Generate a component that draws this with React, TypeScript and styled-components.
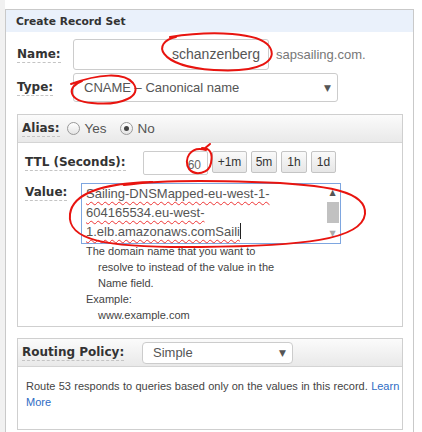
import styled, { createGlobalStyle } from 'styled-components';

const GlobalStyle = createGlobalStyle`
  html, body {
    margin: 0;
    padding: 0;
    background: #fff;
  }
  body {
    font-family: 'Liberation Sans', Arial, sans-serif;
    color: #333;
  }
`;

export default function App() {
  return (
    <>
      <GlobalStyle />
      <Page>
        <Panel>
          <PanelTitle>Create Record Set</PanelTitle>
          <PanelBody>
            <Row>
              <Label $width={56}>
                <Dashed>Name:</Dashed>
              </Label>
              <NameInput>schanzenberg</NameInput>
              <Suffix>sapsailing.com.</Suffix>
            </Row>
            <Row $top={3}>
              <Label $width={56}>
                <Dashed>Type:</Dashed>
              </Label>
              <Select $width={265} $height={29}>
                <span>CNAME – Canonical name</span>
                <Arrow>▼</Arrow>
              </Select>
            </Row>

            <Box $top={12}>
              <BoxHeader>
                <Label>
                  <Dashed>Alias:</Dashed>
                </Label>
                <Radio>
                  <RadioDot />
                  Yes
                </Radio>
                <Radio>
                  <RadioDot $checked />
                  No
                </Radio>
              </BoxHeader>
              <AliasBody>
                <Row>
                  <Label $width={118}>
                    <Dashed>TTL (Seconds):</Dashed>
                  </Label>
                  <TtlInput>60</TtlInput>
                  <TtlButtons>
                    <TtlButton $width={35}>+1m</TtlButton>
                    <TtlButton $width={26}>5m</TtlButton>
                    <TtlButton $width={26}>1h</TtlButton>
                    <TtlButton $width={25}>1d</TtlButton>
                  </TtlButtons>
                </Row>
                <Row $top={8} $align='flex-start'>
                  <Label $width={56} $pad={2}>
                    <Dashed>Value:</Dashed>
                  </Label>
                  <ValueCol>
                    <TextArea>
                      <TextLines>
                        <Squiggle>Sailing-DNSMapped-eu-west-1-</Squiggle>
                        <Squiggle>604165534.eu-west-</Squiggle>
                        <Squiggle>
                          1.elb.amazonaws.comSaili<Caret />
                        </Squiggle>
                      </TextLines>
                      <ScrollBar>
                        <ScrollArrow>▲</ScrollArrow>
                        <ScrollThumb />
                        <ScrollArrow $muted>▼</ScrollArrow>
                      </ScrollBar>
                    </TextArea>
                    <Help>
                      <div>The domain name that you want to</div>
                      <HelpIndent>resolve to instead of the value in the</HelpIndent>
                      <HelpIndent>Name field.</HelpIndent>
                      <div>Example:</div>
                      <HelpIndent>www.example.com</HelpIndent>
                    </Help>
                  </ValueCol>
                </Row>
              </AliasBody>
            </Box>

            <Box $top={11}>
              <BoxHeader>
                <Label $width={120}>
                  <Dashed>Routing Policy:</Dashed>
                </Label>
                <Select $width={151} $height={22} $small>
                  <span>Simple</span>
                  <Arrow>▼</Arrow>
                </Select>
              </BoxHeader>
              <RoutingBody>
                Route 53 responds to queries based only on the values in this record.{' '}
                <Link>Learn</Link> <Link>More</Link>
              </RoutingBody>
            </Box>
          </PanelBody>
        </Panel>

        <Marks viewBox='0 0 422 432' width='422' height='432'>
          {/* name */}
          <path d='M176 37 C152 42 156 66 214 70 C262 73 279 60 269 46 C259 33 214 30 170 37' />
          {/* type */}
          <path d='M82 81 C66 87 68 101 92 103 C122 106 143 96 133 83 C124 72 98 74 71 84' />
          {/* ttl */}
          <path d='M206 150 C190 145 183 160 189 169 C195 176 209 174 211 163 C213 153 210 148 202 148 M204 149 L210 144' />
          {/* value */}
          <path d='M152 182 C110 183 73 191 70 214 C67 240 102 248 200 247 C302 246 362 240 365 214 C367 192 330 184 252 182 C200 180 160 180 124 185' />
        </Marks>
      </Page>
    </>
  );
}

const Page = styled.div`
  position: relative;
  width: 422px;
  height: 432px;
  overflow: hidden;
  box-sizing: border-box;
  padding: 9px 8px 0 0;
  border-left: 5px solid #f1f1f1;
`;

const Panel = styled.div`
  width: 409px;
  border: 1px solid #c9c9c9;
  border-bottom: none;
  box-sizing: border-box;
  min-height: 440px;
`;

const PanelTitle = styled.div`
  height: 22px;
  background: #eaf1fb;
  padding-left: 10px;
  font-family: 'DejaVu Sans', Verdana, sans-serif;
  font-weight: bold;
  font-size: 10.7px;
  line-height: 23px;
  color: #333;
`;

const PanelBody = styled.div`
  padding: 7px 10px 0 11px;
`;

const Row = styled.div<{ $top?: number; $align?: string }>`
  display: flex;
  align-items: ${(p) => p.$align || 'center'};
  margin-top: ${(p) => p.$top || 0}px;
`;

const Label = styled.span<{ $width?: number; $pad?: number }>`
  flex: none;
  width: ${(p) => (p.$width ? `${p.$width}px` : 'auto')};
  padding-top: ${(p) => p.$pad || 0}px;
  font-family: 'DejaVu Sans', Verdana, sans-serif;
  font-weight: bold;
  font-size: 12px;
  color: #333;
`;

const Dashed = styled.span`
  display: inline-block;
  line-height: 15px;
  border-bottom: 1px dashed #c4c4c4;
`;

const NameInput = styled.div`
  width: 196px;
  height: 31px;
  box-sizing: border-box;
  border: 1px solid #ccc;
  border-radius: 3px;
  text-align: right;
  padding-right: 8px;
  font-size: 14px;
  line-height: 29px;
  color: #555;
`;

const Suffix = styled.span`
  margin-left: 7px;
  font-size: 13px;
  color: #777;
`;

const Select = styled.div<{ $width: number; $height: number; $small?: boolean }>`
  display: flex;
  align-items: center;
  justify-content: space-between;
  width: ${(p) => p.$width}px;
  height: ${(p) => p.$height}px;
  box-sizing: border-box;
  border: 1px solid #ccc;
  border-radius: ${(p) => (p.$small ? 4 : 3)}px;
  background: #fff;
  padding: 0 6px 0 10px;
  font-size: 13px;
  color: #555;
`;

const Arrow = styled.span`
  font-size: 9px;
  color: #555;
  font-family: 'DejaVu Sans', sans-serif;
`;

const Box = styled.div<{ $top: number }>`
  margin-top: ${(p) => p.$top}px;
  border: 1px solid #cfcfcf;
  width: 386px;
  box-sizing: border-box;
`;

const BoxHeader = styled.div`
  display: flex;
  align-items: center;
  height: 27px;
  padding-left: 4px;
  background: linear-gradient(#fbfbfb, #e9e9e9);
  border-bottom: 1px solid #d4d4d4;
`;

const Radio = styled.span`
  display: flex;
  align-items: center;
  margin-left: 7px;
  font-size: 13.5px;
  color: #555;
  & + & {
    margin-left: 13px;
  }
`;

const RadioDot = styled.span<{ $checked?: boolean }>`
  position: relative;
  width: 11px;
  height: 11px;
  margin-right: 5px;
  border: 1px solid #999;
  border-radius: 50%;
  background: linear-gradient(#fff, #e4e4e4);
  &::after {
    content: '';
    display: ${(p) => (p.$checked ? 'block' : 'none')};
    position: absolute;
    left: 3px;
    top: 3px;
    width: 5px;
    height: 5px;
    border-radius: 50%;
    background: #444;
  }
`;

const AliasBody = styled.div`
  padding: 8px 0 3px 7px;
`;

const TtlInput = styled.div`
  width: 65px;
  height: 24px;
  box-sizing: border-box;
  border: 1px solid #ccc;
  border-radius: 2px;
  text-align: right;
  padding-right: 6px;
  font-size: 12px;
  line-height: 26px;
  color: #666;
`;

const TtlButtons = styled.div`
  display: flex;
  gap: 4px;
  margin-left: 4px;
  align-self: flex-start;
`;

const TtlButton = styled.button<{ $width: number }>`
  width: ${(p) => p.$width}px;
  height: 22px;
  padding: 0;
  border: 1px solid #c4c4c4;
  border-radius: 2px;
  background: linear-gradient(#fafafa, #e6e6e6);
  font-family: 'Liberation Sans', Arial, sans-serif;
  font-size: 12px;
  color: #333;
`;

const ValueCol = styled.div`
  display: flex;
  flex-direction: column;
`;

const TextArea = styled.div`
  display: flex;
  width: 260px;
  height: 61px;
  box-sizing: border-box;
  border: 1px solid #7ea6e0;
  background: #fff;
`;

const TextLines = styled.div`
  flex: 1;
  padding: 0 0 0 4px;
  font-size: 13px;
  line-height: 19px;
  color: #555;
`;

const Squiggle = styled.div`
  text-decoration: underline wavy #e33 1px;
  text-underline-offset: 3px;
`;

const Caret = styled.span`
  display: inline-block;
  width: 1px;
  height: 16px;
  background: #222;
  vertical-align: -3px;
`;

const ScrollBar = styled.div`
  width: 15px;
  display: flex;
  flex-direction: column;
  align-items: center;
  padding: 2px 0;
`;

const ScrollArrow = styled.span<{ $muted?: boolean }>`
  font-size: 8px;
  line-height: 14px;
  color: ${(p) => (p.$muted ? '#aaa' : '#555')};
  font-family: 'DejaVu Sans', sans-serif;
`;

const ScrollThumb = styled.div`
  width: 12px;
  height: 21px;
  margin: 2px 0 4px;
  background: #c1c1c1;
`;

const Help = styled.div`
  padding: 0 0 0 5px;
  margin-top: -1px;
  font-size: 11px;
  line-height: 16px;
  color: #444;
`;

const HelpIndent = styled.div`
  padding-left: 12px;
`;

const RoutingBody = styled.div`
  padding: 11px 0 19px 8px;
  font-size: 11px;
  line-height: 16px;
  word-spacing: 0.3px;
  color: #444;
`;

const Link = styled.span`
  color: #2e6cc4;
`;

const Marks = styled.svg`
  position: absolute;
  left: -5px;
  top: 0;
  pointer-events: none;
  fill: none;
  stroke: #e8140f;
  stroke-width: 2px;
  stroke-linecap: round;
`;
